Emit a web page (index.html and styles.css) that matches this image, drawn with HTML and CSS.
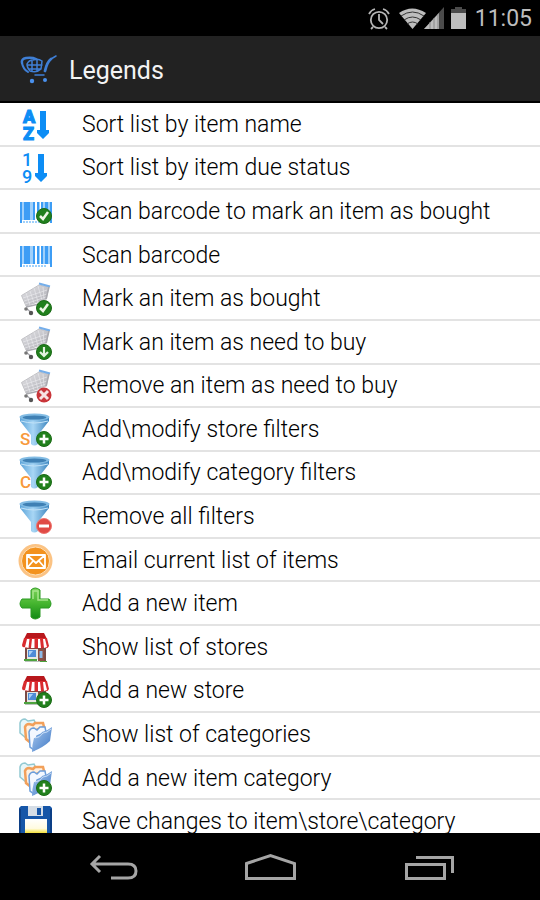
FILE: index.html
```
<!DOCTYPE html>
<html lang="en">
<head>
<meta charset="utf-8">
<meta name="viewport" content="width=device-width, initial-scale=1">
<title>Legends</title>
<link rel="stylesheet" href="styles.css">
</head>
<body>
<svg class="defs" aria-hidden="true">
  <defs>
    <linearGradient id="funnelFill" x1="0" x2="1" y1="0" y2="0"><stop offset="0" stop-color="#5ba3d8"/><stop offset=".45" stop-color="#a8d6f5"/><stop offset="1" stop-color="#3d86bf"/></linearGradient>
    <linearGradient id="cartFill" x1="0" x2="1" y1="0" y2="1"><stop offset="0" stop-color="#e6e6e9"/><stop offset="1" stop-color="#a9a9b0"/></linearGradient>
    <linearGradient id="plusFill" x1="0" x2="0" y1="0" y2="1"><stop offset="0" stop-color="#7ed35c"/><stop offset=".5" stop-color="#45b52f"/><stop offset="1" stop-color="#128a14"/></linearGradient>
    <linearGradient id="folderFill" x1="0" x2="1" y1="0" y2="1"><stop offset="0" stop-color="#a9c9f0"/><stop offset="1" stop-color="#3f78c4"/></linearGradient>
    <linearGradient id="labelFill" x1="0" x2="0" y1="0" y2="1"><stop offset="0" stop-color="#fff"/><stop offset=".45" stop-color="#fffbe0"/><stop offset=".7" stop-color="#f3dc20"/></linearGradient>
    <symbol id="arrow" viewBox="0 0 12 28"><path fill="#0d8df5" d="M3 0h6v19H12v3l-6 6-6-6v-3h3z"/></symbol>
    <symbol id="barcode" viewBox="0 0 36 36">
      <path fill="#3d9df5" d="M2 8h2v21H2zM6 8h6v18H6zM15 8h2v18h-2zM19 8h2v18h-2zM23 8h2v18h-2zM27 8h3v18h-3zM32 8h2v21h-2z"/>
      <path fill="#9fd0fb" d="M4 8h2v18H4zM12 8h3v18h-3zM21 8h1v18h-1zM25 8h2v18h-2zM30 8h2v18h-2z"/>
      <path stroke="#9fd0fb" stroke-width="2" stroke-dasharray="2 1" d="M5 28h24"/>
    </symbol>
    <symbol id="cart" viewBox="0 0 36 36">
      <path fill="url(#cartFill)" stroke="#c2c2c6" d="M3.500 14.500 21 4l9.500 2-2 12L8 25z"/>
      <path fill="none" stroke="#ededf0" stroke-width=".6" d="M5 17l24-8M6 20l23-7M7 23l21-7M8 12l4 12M12 10l4 12M16 7l4 14M20 5l4 14M25 6l1 12"/>
      <path fill="none" stroke="#75aeea" stroke-width="2" d="M21 2.500 32 5.500"/>
      <path fill="none" stroke="#aaaab0" stroke-width="1.500" d="M31 6l-3 12M8 26l13-3M9 28l5 4"/>
      <circle cx="8" cy="28" r="1.800" fill="#777"/><circle cx="13" cy="32" r="2.200" fill="#555"/>
    </symbol>
    <symbol id="funnel" viewBox="0 0 36 36">
      <path fill="url(#funnelFill)" d="M2 4v5l11 14v9q3 3 7 0v-9L31 9V4z"/>
      <ellipse cx="16.500" cy="5" rx="15" ry="3.500" fill="#83bce4"/>
      <ellipse cx="16.500" cy="5.500" rx="12" ry="2" fill="#3f80b4"/>
      <path fill="none" stroke="#c3e3f8" d="M3 9q13 4 27 0"/>
    </symbol>
    <symbol id="disc" viewBox="0 0 16 16"><circle cx="8" cy="8" r="7.500" fill="#21801d" stroke="#1b6b17"/></symbol>
    <symbol id="badgeCheck" viewBox="0 0 16 16"><use href="#disc"/><path fill="none" stroke="#eef7e6" stroke-width="2.500" d="M4 8l3 3 5-7"/></symbol>
    <symbol id="badgePlus" viewBox="0 0 16 16"><use href="#disc"/><path stroke="#fff" stroke-width="2.500" d="M3.500 8h9M8 3.500v9"/></symbol>
    <symbol id="badgeDown" viewBox="0 0 16 16"><use href="#disc"/><path fill="none" stroke="#e4f3e0" stroke-width="2.200" d="M8 3v9M4 8l4 4 4-4"/></symbol>
    <symbol id="store" viewBox="0 0 36 36">
      <path fill="#e6e6e2" d="M7 17h21v13H7z"/>
      <path fill="#7a4b45" d="M7 18h2v12H7zM26 18h2v13h-2zM8 17h19v2H8z"/>
      <path fill="#4e8bd6" d="M10 20h8v7h-8z"/><path fill="#a9d0f7" d="M11 21h4l-4 5z"/>
      <path fill="#8c5044" d="M20 19h6v13h-6z"/><path fill="#8db9e5" d="M21.500 21h3v7h-3z"/>
      <path fill="#4da33e" d="M6 29h13v2H6zM22 31h7v1h-7z"/><path fill="#b9c3bb" d="M7 31h15v1H7z"/>
      <path fill="#b8171c" d="M9 3h17l3 6H6z"/>
      <path fill="#d92b2e" d="M6 8h23l2 8q-2 4-5 1-2 3-5 0-2 3-5 0-2 3-5 0-2 3-4 0-3 1-3-2z"/>
      <path fill="#fff" d="M9 9h2.500l-1 9-3.500-1zM14 9h2.500v9H13zM20 9h2l1 9h-3zM25 9h2l2 8-3 1z"/>
    </symbol>
    <symbol id="folders" viewBox="0 0 36 36">
      <path fill="#e8f6f8" stroke="#92c9d2" stroke-width="1.500" d="M2 6q1-4 5-4l3 2 6-1 2 4-9 5-1 9-6-5z"/>
      <path fill="#fff0df" stroke="#f2a05a" stroke-width="2.500" d="M7 10q1-3 4-3l4 1 2-2h8l1 4-10 4-3 12-5-4z"/>
      <path fill="#f4f8ff" stroke="#6c9edb" stroke-width="1.500" d="M11 15q1-4 5-4l3 2 3-3h5l1 5-9 4-3 14-4-3z"/>
      <path fill="url(#folderFill)" d="M16 21q5 0 8-6 5-1 10-5l-2 14q-6 6-18 11 0-7 2-14z"/>
      <path fill="none" stroke="#c5dbf5" d="M17 21q5 0 8-5 4 0 8-4"/>
    </symbol>
  </defs>
</svg>

<div class="status">
  <svg class="status-icons" viewBox="0 0 104 36" role="img" aria-label="Alarm, Wi-Fi, signal, battery">
    <g fill="none" stroke="#b5b5b5" stroke-width="1.800"><circle cx="14" cy="19" r="8.200"/><path d="M14 13v6l4 4M4 13q2-4 6-5M24 13q-2-4-6-5M8 26l-2 2M20 26l2 2"/></g>
    <path fill="#bdbdbd" d="M34 12q13-9 27 0L47.500 28z"/>
    <g fill="none" stroke="#333" stroke-width="1"><path d="M36 15q11.500-8 23 0M39 19q8.500-6 17 0M42 23q5.500-4 11 0"/></g>
    <path fill="#4b4b4b" d="M79 6v22H59z"/><path fill="#bdbdbd" d="M74 12v16H59z"/>
    <path stroke="#888" stroke-width="1" d="M65 21v7M69 17v11M73 13v15"/>
    <path fill="#4b4b4b" d="M90 6h7v2h4v5H86V8h4z"/><path fill="#bdbdbd" d="M86 12h15v16H86z"/>
  </svg>
  <time class="clock">11:05</time>
</div>

<header class="bar">
  <svg class="logo" viewBox="0 0 40 32" aria-hidden="true">
    <g fill="none" stroke="#3f7fd6" stroke-linecap="round">
      <path stroke-width="2.500" d="M3 8q-1-4 4-5 6-1 10 1"/><path stroke-width="2" d="M3 8q1 6 6 9"/>
      <path stroke-width="1.500" d="M8 9q2-4 6-4 5-2 9 1l-1 8q-4 4-11 2-3-3-3-7zM8 10h15M10 14h12M13 5v11M18 4v12"/>
      <path stroke-width="2.800" d="M26 16q2-9 6-12"/><path stroke-width="1.500" d="M32 4l5-3M16 20h9"/>
    </g>
    <circle cx="13" cy="26" r="2.200" fill="#4a91ee"/><circle cx="26" cy="25" r="2" fill="#4a91ee"/>
  </svg>
  <h1 class="title">Legends</h1>
</header>

<main class="content">
  <ul class="legend">
    <li class="row"><svg class="icon" viewBox="0 0 36 36" aria-hidden="true"><text class="heavy" x="5" y="16">A</text><text class="heavy" x="5" y="33">Z</text><use href="#arrow" x="19" y="4" width="12" height="28"/></svg>Sort list by item name</li>
    <li class="row"><svg class="icon" viewBox="0 0 36 36" aria-hidden="true"><text class="digit" x="4" y="16">1</text><text class="digit" x="4" y="33">9</text><use href="#arrow" x="17" y="4" width="12" height="28"/></svg>Sort list by item due status</li>
    <li class="row"><svg class="icon" viewBox="0 0 36 36" aria-hidden="true"><use href="#barcode"/><use href="#badgeCheck" x="18" y="14" width="16" height="16"/></svg>Scan barcode to mark an item as bought</li>
    <li class="row"><svg class="icon" viewBox="0 0 36 36" aria-hidden="true"><use href="#barcode"/></svg>Scan barcode</li>
    <li class="row"><svg class="icon" viewBox="0 0 36 36" aria-hidden="true"><use href="#cart"/><use href="#badgeCheck" x="18" y="19" width="16" height="16"/></svg>Mark an item as bought</li>
    <li class="row"><svg class="icon" viewBox="0 0 36 36" aria-hidden="true"><use href="#cart"/><use href="#badgeDown" x="18" y="19" width="16" height="16"/></svg>Mark an item as need to buy</li>
    <li class="row"><svg class="icon" viewBox="0 0 36 36" aria-hidden="true"><use href="#cart"/><circle cx="26" cy="27" r="7.500" fill="#c9353a"/><path stroke="#f7e3e3" stroke-width="3" d="M22 23l8 8M30 23l-8 8"/></svg>Remove an item as need to buy</li>
    <li class="row"><svg class="icon" viewBox="0 0 36 36" aria-hidden="true"><use href="#funnel"/><text class="mark" x="2" y="33">S</text><use href="#badgePlus" x="18" y="19" width="16" height="16"/></svg>Add\modify store filters</li>
    <li class="row"><svg class="icon" viewBox="0 0 36 36" aria-hidden="true"><use href="#funnel"/><text class="mark" x="2" y="33">C</text><use href="#badgePlus" x="18" y="19" width="16" height="16"/></svg>Add\modify category filters</li>
    <li class="row"><svg class="icon" viewBox="0 0 36 36" aria-hidden="true"><use href="#funnel"/><circle cx="26" cy="27" r="7.500" fill="#e04a45" stroke="#ee7771"/><path fill="#fff" d="M21 25.500h10v3H21z"/></svg>Remove all filters</li>
    <li class="row"><svg class="icon" viewBox="0 0 36 36" aria-hidden="true"><circle cx="17.500" cy="18" r="17" fill="#fbc384"/><circle cx="17.500" cy="18" r="14" fill="#f3921e" stroke="#fde0b8"/><path fill="#f3921e" stroke="#fff" stroke-width="1.800" stroke-linejoin="round" d="M9 12h18v13H9zM9 12l9 8 9-8M9 25l6-7M27 25l-6-7"/></svg>Email current list of items</li>
    <li class="row"><svg class="icon" viewBox="0 0 36 36" aria-hidden="true"><path fill="url(#plusFill)" stroke="#2b9a22" stroke-linejoin="round" d="M13 4q4-4 9 0v9h9q4 5 0 9h-9v9q-5 4-9 0v-9H4q-4-4 0-9h9z"/><path fill="none" stroke="#a5e58b" stroke-width="1.500" d="M15 13V5h5v9h10"/></svg>Add a new item</li>
    <li class="row"><svg class="icon" viewBox="0 0 36 36" aria-hidden="true"><use href="#store"/></svg>Show list of stores</li>
    <li class="row"><svg class="icon" viewBox="0 0 36 36" aria-hidden="true"><use href="#store"/><use href="#badgePlus" x="18" y="19" width="16" height="16"/></svg>Add a new store</li>
    <li class="row"><svg class="icon" viewBox="0 0 36 36" aria-hidden="true"><use href="#folders"/></svg>Show list of categories</li>
    <li class="row"><svg class="icon" viewBox="0 0 36 36" aria-hidden="true"><use href="#folders"/><use href="#badgePlus" x="18" y="19" width="16" height="16"/></svg>Add a new item category</li>
    <li class="row"><svg class="icon" viewBox="0 0 36 36" aria-hidden="true"><path fill="#1656a8" d="M3 2h29l2 2v32H1V4z"/><path fill="#0c3f86" d="M1 5h2v31H1zM32 5h2v31h-2z"/><path fill="#d5dde6" d="M10 2h15v10H10z"/><path fill="#1656a8" d="M19 4h4v7h-4z"/><path fill="url(#labelFill)" d="M7 15h22v21H7z"/></svg>Save changes to item\store\category</li>
  </ul>
</main>

<nav class="nav" aria-label="System">
  <button class="key" type="button" aria-label="Back"><svg class="glyph" viewBox="0 0 60 30"><path fill="none" stroke="#a5a5a5" stroke-width="3" d="M20 3l-8 8 8 8M12 11h36q8 0 8 7t-8 7H31"/></svg></button>
  <button class="key" type="button" aria-label="Home"><svg class="glyph" viewBox="0 0 60 30"><path fill="none" stroke="#a5a5a5" stroke-width="3" d="M6.500 10.500 30.500 2.500l24 8v15h-48z"/></svg></button>
  <button class="key" type="button" aria-label="Recent apps"><svg class="glyph" viewBox="0 0 60 30"><path fill="none" stroke="#a5a5a5" stroke-width="3" d="M6.500 11.500h38v14h-38zM16 4.500h36.500V20"/></svg></button>
</nav>
</body>
</html>
```
FILE: styles.css
```
* {
  box-sizing: border-box;
}

body {
  display: flex;
  flex-direction: column;
  height: 100vh;
  margin: 0;
  background: #000;
  font-family: Roboto, "Liberation Sans", sans-serif;
}

.defs {
  position: absolute;
  width: 0;
  height: 0;
}

.status {
  display: flex;
  flex: none;
  align-items: center;
  justify-content: flex-end;
  gap: 6px;
  height: 36px;
  padding: 2px 8px 0 0;
  color: #bdbdbd;
}

.status-icons {
  width: 104px;
  height: 36px;
}

.clock {
  font-size: 23px;
  line-height: 36px;
}

.bar {
  display: flex;
  flex: none;
  align-items: center;
  gap: 10px;
  height: 67px;
  padding: 4px 19px 0;
  border-bottom: 2px solid #000;
  background: #222;
}

.logo {
  width: 40px;
  height: 32px;
}

.title {
  margin: 0;
  color: #f3f3f3;
  font-size: 25px;
  font-weight: 400;
  line-height: 32px;
}

.content {
  flex: 1;
  min-height: 0;
  overflow: hidden;
  background: #fff;
}

/* The last row runs on below the fold. */
.legend {
  display: grid;
  grid-auto-rows: 1fr;
  height: calc(100% + 11px);
  margin: 0;
  padding: 0;
  list-style: none;
}

.row {
  display: flex;
  align-items: center;
  gap: 28px;
  padding: 2px 18px 0;
  border-bottom: 2px solid #e3e3e3;
  color: #000;
  font-size: 23px;
  font-weight: 300;
  line-height: 28px;
  white-space: nowrap;
}

.icon {
  flex: none;
  width: 36px;
  height: 36px;
}

.heavy,
.digit {
  fill: #0d8df5;
  font-size: 18px;
  font-weight: 900;
}

.heavy {
  stroke: #0d8df5;
  stroke-width: 1px;
}

.digit {
  font-weight: 500;
}

.mark {
  fill: #f7993b;
  font-size: 17px;
  font-weight: 500;
}

.nav {
  display: flex;
  flex: none;
  justify-content: center;
  height: 67px;
  padding-top: 3px;
}

.key {
  display: flex;
  flex: 0 1 160px;
  align-items: center;
  justify-content: center;
  padding: 0;
  border: 0;
  background: none;
}

.glyph {
  width: 60px;
  height: 30px;
}
```
